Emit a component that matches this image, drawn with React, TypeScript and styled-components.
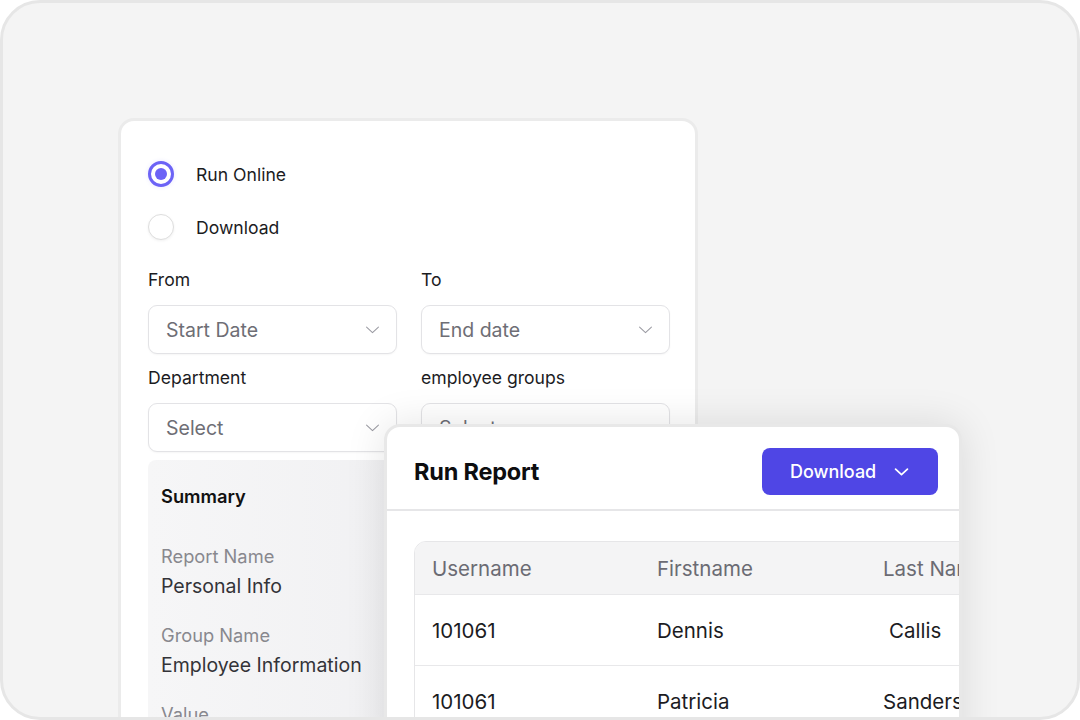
import React from "react";
import styled, { createGlobalStyle } from "styled-components";

const Global = createGlobalStyle`
  html, body { margin: 0; padding: 0; background: #ffffff; }
  body { font-family: Inter, "Noto Sans", "Liberation Sans", sans-serif; -webkit-font-smoothing: antialiased; }
  * { box-sizing: border-box; }
`;

const Frame = styled.div`
  position: relative;
  width: 1080px;
  height: 720px;
  border: 3px solid #e6e6e6;
  border-radius: 40px;
  background: #f4f4f4;
  overflow: hidden;
  padding: 115px 0 0 115px;
`;

const FormCard = styled.div`
  width: 580px;
  height: 700px;
  background: #ffffff;
  border: 3px solid #ebebeb;
  border-radius: 16px;
  padding: 40px 26px 0 27px;
  display: flex;
  flex-direction: column;
`;

const RadioGroup = styled.div`
  display: flex;
  flex-direction: column;
  gap: 27px;
`;

const RadioRow = styled.div`
  display: flex;
  align-items: center;
  gap: 22px;
  height: 26px;
  font-size: 17.6px;
  color: #1c1c1f;
`;

const RadioDot = styled.span<{ $checked?: boolean }>`
  width: 26px;
  height: 26px;
  border-radius: 50%;
  flex-shrink: 0;
  border: ${(p) => (p.$checked ? "3px solid #6c63f6" : "1.5px solid #dedede")};
  background: #fff;
  display: flex;
  align-items: center;
  justify-content: center;
  box-shadow: ${(p) => (p.$checked ? "0 0 4px rgba(108,99,246,0.15)" : "0 1px 3px rgba(0,0,0,0.06)")};
  &::after {
    content: "";
    display: ${(p) => (p.$checked ? "block" : "none")};
    width: 12px;
    height: 12px;
    border-radius: 50%;
    background: #6c63f6;
  }
`;

const FieldGrid = styled.div`
  margin-top: 28px;
  display: grid;
  grid-template-columns: 249px 249px;
  column-gap: 24px;
  row-gap: 12px;
`;

const Field = styled.div`
  display: flex;
  flex-direction: column;
  gap: 13px;
`;

const Label = styled.div`
  font-size: 17.6px;
  line-height: 24px;
  color: #1c1c1f;
`;

const SelectBox = styled.div`
  height: 49px;
  border: 1.5px solid #e3e3e6;
  border-radius: 9px;
  background: #fff;
  display: flex;
  align-items: center;
  justify-content: space-between;
  padding: 0 14px 0 17px;
  font-size: 19.5px;
  color: #6e6e75;
  box-shadow: 0 1px 2px rgba(0,0,0,0.04);
`;

const Summary = styled.div`
  margin-top: 8px;
  width: 249px;
  flex: 1;
  background: linear-gradient(90deg, #f6f6f7 0%, #f1f1f3 100%);
  border-radius: 8px 8px 0 0;
  padding: 24px 13px 0 13px;
  display: flex;
  flex-direction: column;
`;

const SummaryTitle = styled.div`
  font-size: 18.3px;
  line-height: 24px;
  font-weight: 600;
  color: #111;
  margin-bottom: 36px;
`;

const SummaryItem = styled.div`
  display: flex;
  flex-direction: column;
  gap: 6px;
  margin-bottom: 25px;
`;

const SummaryLabel = styled.div`
  font-size: 18.3px;
  line-height: 24px;
  color: #88888e;
`;

const SummaryValue = styled.div`
  font-size: 19.5px;
  line-height: 24px;
  color: #333338;
`;

const ReportCard = styled.div`
  position: absolute;
  left: 381px;
  top: 421px;
  width: 578px;
  height: 340px;
  background: #fff;
  border: 3px solid #e8e8e8;
  border-radius: 16px;
  overflow: hidden;
  box-shadow: 0 0 40px rgba(0, 0, 0, 0.11);
`;

const ReportHeader = styled.div`
  height: 84px;
  display: flex;
  align-items: center;
  justify-content: space-between;
  padding: 6px 21px 0 27px;
  border-bottom: 2px solid #e6e6e8;
`;

const Title = styled.div`
  font-size: 23.5px;
  font-weight: 700;
  color: #0d0d0f;
  letter-spacing: -0.2px;
`;

const PrimaryButton = styled.button`
  width: 176px;
  height: 47px;
  border: none;
  border-radius: 8px;
  background: #4f46e5;
  color: #fff;
  font-family: inherit;
  font-size: 18px;
  font-weight: 500;
  display: flex;
  align-items: center;
  padding: 0 0 0 28px;
  gap: 16px;
`;

const TableWrap = styled.div`
  padding: 30px 0 0 27px;
`;

const Table = styled.div`
  width: 720px;
  border: 1.5px solid #e6e6e8;
  border-radius: 12px;
  overflow: hidden;
`;

const Row = styled.div<{ $head?: boolean }>`
  display: grid;
  grid-template-columns: 225px 226px 269px;
  align-items: center;
  height: ${(p) => (p.$head ? "52px" : "71px")};
  background: ${(p) => (p.$head ? "#f4f4f5" : "#fff")};
  border-top: ${(p) => (p.$head ? "none" : "1.5px solid #e8e8ea")};
  font-size: 20.5px;
  color: ${(p) => (p.$head ? "#6b6b73" : "#1c1c1f")};
`;

const Cell = styled.div<{ $shift?: number }>`
  padding-left: ${(p) => 17 + (p.$shift ?? 0)}px;
  white-space: nowrap;
`;

const Chevron = ({ color, size, stroke }: { color: string; size: number; stroke: number }) => (
  <svg width={size} height={size} viewBox="0 0 24 24" fill="none" stroke={color} strokeWidth={stroke} strokeLinecap="round" strokeLinejoin="round">
    <path d="M4.5 9l7.5 7 7.5-7" />
  </svg>
);

export default function App() {
  return (
    <>
      <Global />
      <Frame>
        <FormCard>
          <RadioGroup>
            <RadioRow>
              <RadioDot $checked />
              Run Online
            </RadioRow>
            <RadioRow>
              <RadioDot />
              Download
            </RadioRow>
          </RadioGroup>
          <FieldGrid>
            <Field>
              <Label>From</Label>
              <SelectBox>
                Start Date
                <Chevron color="#9a9aa2" size={19} stroke={1.3} />
              </SelectBox>
            </Field>
            <Field>
              <Label>To</Label>
              <SelectBox>
                End date
                <Chevron color="#9a9aa2" size={19} stroke={1.3} />
              </SelectBox>
            </Field>
            <Field>
              <Label>Department</Label>
              <SelectBox>
                Select
                <Chevron color="#9a9aa2" size={19} stroke={1.3} />
              </SelectBox>
            </Field>
            <Field>
              <Label>employee groups</Label>
              <SelectBox>
                Select
                <Chevron color="#9a9aa2" size={19} stroke={1.3} />
              </SelectBox>
            </Field>
          </FieldGrid>
          <Summary>
            <SummaryTitle>Summary</SummaryTitle>
            <SummaryItem>
              <SummaryLabel>Report Name</SummaryLabel>
              <SummaryValue>Personal Info</SummaryValue>
            </SummaryItem>
            <SummaryItem>
              <SummaryLabel>Group Name</SummaryLabel>
              <SummaryValue>Employee Information</SummaryValue>
            </SummaryItem>
            <SummaryItem>
              <SummaryLabel>Value</SummaryLabel>
              <SummaryValue>Personal</SummaryValue>
            </SummaryItem>
          </Summary>
        </FormCard>

        <ReportCard>
          <ReportHeader>
            <Title>Run Report</Title>
            <PrimaryButton>
              Download
              <Chevron color="#ffffff" size={19} stroke={2.2} />
            </PrimaryButton>
          </ReportHeader>
          <TableWrap>
            <Table>
              <Row $head>
                <Cell>Username</Cell>
                <Cell>Firstname</Cell>
                <Cell>Last Name</Cell>
              </Row>
              <Row>
                <Cell>101061</Cell>
                <Cell>Dennis</Cell>
                <Cell $shift={6}>Callis</Cell>
              </Row>
              <Row>
                <Cell>101061</Cell>
                <Cell>Patricia</Cell>
                <Cell>Sanders</Cell>
              </Row>
            </Table>
          </TableWrap>
        </ReportCard>
      </Frame>
    </>
  );
}
